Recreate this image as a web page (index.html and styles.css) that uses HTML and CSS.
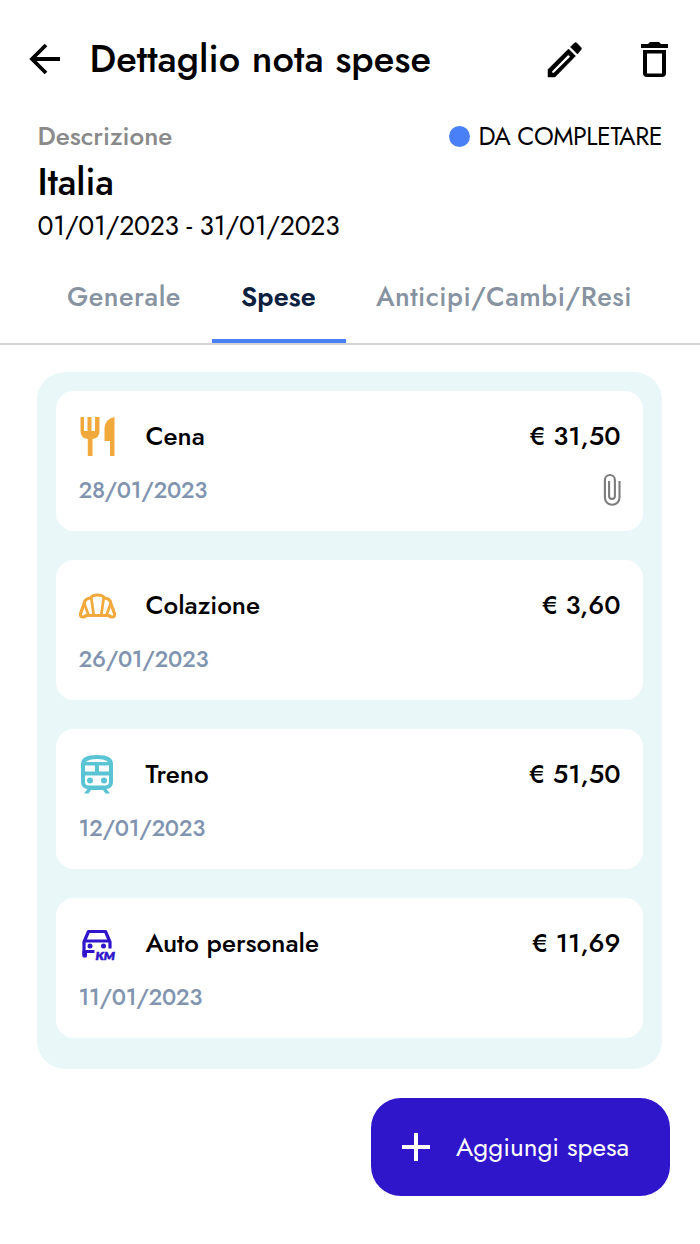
FILE: index.html
```html
<!DOCTYPE html>
<html lang="it">
<head>
<meta charset="utf-8">
<title>Dettaglio nota spese</title>
<link rel="stylesheet" href="styles.css">
</head>
<body>
<header class="topbar">
  <svg class="back" viewBox="0 0 32 32"><path d="M31 16H3.500M17 2 3 16l14 14" fill="none" stroke="#000" stroke-width="3.800"/></svg>
  <h1 class="title">Dettaglio nota spese</h1>
  <svg class="edit" viewBox="0 0 34 35"><path d="M0 27.500 20.500 7 27.500 14 7 35H0zM4 29.200V31H5.800L22.300 14.800 20.200 12.700zM22.500 5 26.500 1Q27.500 0 28.700 1L33 5.500Q34 6.500 33 7.700L29.500 12z" fill="#000" stroke="#000" stroke-width=".5" fill-rule="evenodd"/></svg>
  <svg class="trash" viewBox="0 0 27 35"><path d="M0 2H7L9 0H18L20 2H27V6H0zM2 8H25V31Q25 35 21 35H6Q2 35 2 31zM6 11.500V31.500H21V11.500z" fill="#000" fill-rule="evenodd"/></svg>
</header>
<section class="summary">
  <div class="summary-head">
    <span class="label">Descrizione</span>
    <span class="status"><i class="dot"></i><span class="status-text">DA COMPLETARE</span></span>
  </div>
  <div class="name">Italia</div>
  <div class="period">01/01/2023 - 31/01/2023</div>
</section>
<nav class="tabs">
  <a class="tab tab-general">Generale</a>
  <a class="tab tab-active">Spese</a>
  <a class="tab">Anticipi/Cambi/Resi</a>
</nav>
<main class="panel">
  <article class="card">
    <div class="line">
      <svg class="icon" viewBox="0 0 40 40"><path d="M1.500 0H5V14H8.500V0H12.500V14H16V0H20.500V14Q20.500 21 13.500 22V39H8.800V22Q1.500 21 1.500 14zM35.500 0V39H31V24H25.500V12Q25.500 2 35.500 0z" fill="#f2a93b"/></svg>
      <span class="kind">Cena</span><span class="amount">€ 31,50</span>
    </div>
    <div class="line-sub">
      <span class="date">28/01/2023</span>
      <svg class="clip" viewBox="0 0 18 34"><path d="M16.500 8V24.500A7.300 7.300 0 0 1 1.900 24.500V7A5 5 0 0 1 11.900 7V23A2.900 2.900 0 0 1 6.100 23V8" fill="none" stroke="#7d7d7d" stroke-width="2.100"/></svg>
    </div>
  </article>
  <article class="card">
    <div class="line">
      <svg class="icon" viewBox="0 0 40 40"><g fill="none" stroke="#f2a93b" stroke-linejoin="round" stroke-linecap="round"><path d="M5 18Q5.500 12.500 11.500 12Q13 9 18.500 9Q24 9 25.500 12Q31.500 12.500 32 18L35.500 27.500Q36.200 31 33 31Q31 31 30 29.500H7Q6 31 4 31Q.8 31 1.500 27.500z" stroke-width="3.200"/><path d="M12.300 12 14.700 29M24.700 12 22.300 29M5.500 18 9.500 29M31.500 18 27.500 29" stroke-width="2.700"/></g></svg>
      <span class="kind">Colazione</span><span class="amount">€ 3,60</span>
    </div>
    <div class="line-sub"><span class="date">26/01/2023</span></div>
  </article>
  <article class="card">
    <div class="line">
      <svg class="icon" viewBox="0 0 40 40"><path d="M2 9Q2 0 18 0Q34 0 34 9V27Q34 33 27.500 34L31 38.500H26.500L24 35H12L9.500 38.500H5L8.500 34Q2 33 2 27zM7 7H29Q26 4 18 4Q10 4 7 7zM6 10.500V16.500H16V10.500zM20 10.500V16.500H30V10.500zM6 20.500V27Q6 30.500 10 30.500H26Q30 30.500 30 27V20.500z" fill="#5bc4d4" fill-rule="evenodd"/><circle cx="11" cy="25.500" r="3" fill="#5bc4d4"/><circle cx="25" cy="25.500" r="3" fill="#5bc4d4"/></svg>
      <span class="kind">Treno</span><span class="amount">€ 51,50</span>
    </div>
    <div class="line-sub"><span class="date">12/01/2023</span></div>
  </article>
  <article class="card">
    <div class="line">
      <svg class="icon" viewBox="0 0 40 40"><g transform="translate(0 3)"><path d="M31 21.500V15L26.500 4.500H9.500L5 15V28M4.500 14H31.500M4.500 24.500H15.500" fill="none" stroke="#2f16cb" stroke-width="3.200" stroke-linejoin="round"/><path d="M3.400 24H8V29Q8 30.500 6.500 30.500H5Q3.400 30.500 3.400 29z" fill="#2f16cb"/><circle cx="11" cy="19" r="2.500" fill="#2f16cb"/><circle cx="24.500" cy="19" r="2.500" fill="#2f16cb"/><text class="km" x="16.500" y="33" textLength="19.500" lengthAdjust="spacingAndGlyphs">KM</text></g></svg>
      <span class="kind">Auto personale</span><span class="amount">€ 11,69</span>
    </div>
    <div class="line-sub"><span class="date">11/01/2023</span></div>
  </article>
</main>
<button class="add"><svg class="plus" viewBox="0 0 28 28"><path d="M14 0V28M0 14H28" stroke="#fff" stroke-width="4"/></svg><span class="add-text">Aggiungi spesa</span></button>
</body>
</html>
```
FILE: styles.css
```css
* { box-sizing: border-box; }
body { margin: 0; background: #fff; color: #000; font-family: Jost, Lato, sans-serif; display: flex; flex-direction: column; min-height: 1244px; }
svg { display: block; flex: none; overflow: visible; }
.topbar { display: flex; align-items: center; height: 118px; padding: 0 32px 0 29px; }
.back { width: 32px; height: 32px; }
.title { margin: 0 auto 0 28.500px; font-size: 38px; font-weight: 500; line-height: 50px; letter-spacing: .08px; white-space: nowrap; }
.edit { width: 34px; height: 35px; margin-right: 59px; }
.trash { width: 27px; height: 35px; }
.summary { padding: 0 38px 0 37.500px; height: 132px; }
.summary-head { display: flex; justify-content: space-between; align-items: center; height: 36px; }
.label { font-size: 26px; font-weight: 500; color: #8a8a8a; }
.status { display: flex; align-items: center; gap: 8px; font-size: 25px; letter-spacing: -.45px; white-space: nowrap; }
.dot { width: 21px; height: 21px; border-radius: 50%; background: #4a80f7; }
.name { font-size: 37px; font-weight: 500; line-height: 56px; }
.period { font-size: 26.500px; line-height: 33px; letter-spacing: -.22px; white-space: nowrap; }
.tabs { display: flex; height: 95px; padding-left: 37px; border-bottom: 2px solid #d3d3d3; }
.tab { flex: none; height: 93px; padding: 29px 30px 0; line-height: 36px; font-size: 27px; font-weight: 500; letter-spacing: .48px; color: #8793a1; white-space: nowrap; }
.tab-general { width: 175px; }
.tab-active { width: 134px; padding: 29px 29px 0; letter-spacing: .1px; color: #0c2040; font-weight: 560; border-bottom: 4px solid #4a80f7; }
.panel { display: flex; flex-direction: column; gap: 29px; width: 625px; height: 697px; margin: 27px 0 0 37px; padding: 19px; border-radius: 28px; background: #e9f7f9; }
.card { height: 140px; padding: 25px 22.500px 0; border-radius: 18px; background: #fff; }
.line { display: flex; align-items: center; height: 40px; font-size: 26px; font-weight: 500; white-space: nowrap; }
.icon { width: 40px; height: 40px; margin-right: 27px; position: relative; top: 1px; }
.amount { margin-left: auto; }
.line-sub { display: flex; justify-content: space-between; align-items: center; height: 34px; margin-top: 17px; }
.date { font-size: 22.800px; font-weight: 500; letter-spacing: -.32px; color: #8094b0; }
.clip { width: 18px; height: 34px; }
.km { font: italic 800 12px Lato, sans-serif; fill: #2f16cb; stroke: #2f16cb; stroke-width: .5px; }
.add { display: flex; align-items: center; width: 299px; height: 98px; margin: 29px 0 0 371px; padding: 0 0 0 31px; border: 0; border-radius: 30px; background: #2f16cb; color: #fff; font: 400 26.200px Jost, Lato, sans-serif; white-space: nowrap; }
.plus { width: 28px; height: 28px; margin-right: 26px; }
```
